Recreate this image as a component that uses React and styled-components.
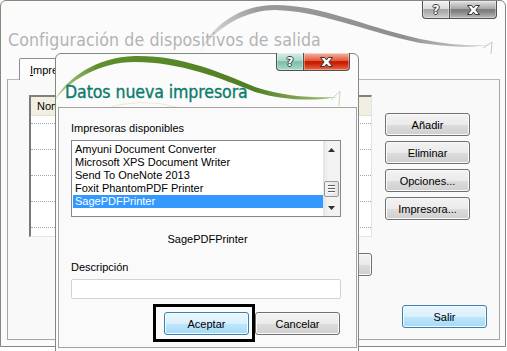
import React from 'react';
import styled, { createGlobalStyle, css } from 'styled-components';

const GlobalStyle = createGlobalStyle`
  html, body {
    margin: 0;
    padding: 0;
    background: #fff;
  }
  body {
    width: 507px;
    height: 351px;
    overflow: hidden;
    font-family: "Liberation Sans", Arial, sans-serif;
    font-size: 11px;
    color: #000;
  }
`;

const Desktop = styled.div`
  position: relative;
  width: 507px;
  height: 351px;
  overflow: hidden;
  background: #fff;
`;

const Window = styled.div`
  position: absolute;
  left: ${(p) => p.$left}px;
  top: ${(p) => p.$top}px;
  width: ${(p) => p.$width}px;
  height: ${(p) => p.$height}px;
  box-sizing: border-box;
  border: 1px solid #7f8b7b;
  border-radius: 6px 6px 0 0;
  background: #fbfbfb;
  display: flex;
  flex-direction: column;
  z-index: ${(p) => p.$z || 1};
`;

const Swoosh = styled.svg`
  position: absolute;
  left: 0;
  top: 0;
  pointer-events: none;
  z-index: 0;
`;

const CaptionRow = styled.div`
  position: relative;
  z-index: 2;
  display: flex;
  justify-content: flex-end;
  height: 18px;
  margin-top: ${(p) => p.$top || 0}px;
  padding-right: ${(p) => p.$right}px;
`;

const tones = {
  grayHelp: ['#f4f4f4', '#dadada', '#a9a9a9', '#cfcfcf'],
  grayClose: ['#e2e2e2', '#a8a8a8', '#7f7f7f', '#b9b9b9'],
  tealHelp: ['#d6eee6', '#a9d8ca', '#7fc2ad', '#a9dcc9'],
  redClose: ['#f3b6a6', '#e2583a', '#c91e02', '#ea6a48'],
};

const CaptionButton = styled.div`
  box-sizing: border-box;
  width: ${(p) => p.$width}px;
  height: 18px;
  display: flex;
  align-items: center;
  justify-content: center;
  border: 1px solid #4f5250;
  border-top: none;
  background: ${(p) => {
    const t = tones[p.$tone];
    return `linear-gradient(${t[0]} 0%, ${t[1]} 45%, ${t[2]} 50%, ${t[2]} 60%, ${t[3]} 100%)`;
  }};
  box-shadow: inset 0 0 0 1px rgba(255, 255, 255, 0.35);
  ${(p) =>
    p.$first
      ? css`
          border-radius: 0 0 0 4px;
        `
      : css`
          border-left: none;
          border-radius: 0 0 4px 0;
        `}
`;

const HelpGlyph = styled.span`
  font-family: "DejaVu Sans", sans-serif;
  font-weight: bold;
  font-size: 12px;
  line-height: 12px;
  color: #fff;
  text-shadow: 1px 0 #3a3a3a, -1px 0 #3a3a3a, 0 1px #3a3a3a, 0 -1px #3a3a3a;
`;

const CloseGlyph = () => (
  <svg width="15" height="12" viewBox="0 0 15 12">
    <path
      d="M1.5 1.5 h4 l2 2.4 l2 -2.4 h4 l-3.6 4.5 l3.6 4.5 h-4 l-2 -2.4 l-2 2.4 h-4 l3.6 -4.5 z"
      fill="#fff"
      stroke="#333"
      strokeWidth="1"
      strokeLinejoin="round"
    />
  </svg>
);

const Title = styled.div`
  position: relative;
  z-index: 1;
  margin: ${(p) => p.$top}px 0 0 ${(p) => p.$left}px;
  height: 22px;
  line-height: 22px;
  font-family: "DejaVu Sans Condensed", "DejaVu Sans", sans-serif;
  font-size: 17.6px;
  letter-spacing: ${(p) => p.$spacing || 0}px;
  color: ${(p) => p.$color};
  -webkit-text-stroke: ${(p) => p.$stroke || 0}px ${(p) => p.$color};
  white-space: nowrap;
`;

/* ---------- back window ---------- */

const TabStrip = styled.div`
  display: flex;
  height: 21px;
  margin-top: 7px;
  padding-left: 18px;
  position: relative;
  z-index: 2;
`;

const Tab = styled.div`
  box-sizing: border-box;
  width: 80px;
  height: 22px;
  padding: 5px 0 0 10px;
  border: 1px solid #898c95;
  border-bottom: none;
  border-radius: 2px 2px 0 0;
  background: #fcfcfc;
`;

const Panel = styled.div`
  flex: 1;
  display: flex;
  flex-direction: column;
  margin: 0 5px 6px 6px;
  border: 1px solid #a6a6a6;
  border-top-color: #b9b9b9;
  background: #f9f9f9;
`;

const PanelTop = styled.div`
  display: flex;
  align-items: flex-start;
  padding: 15px 0 0 21px;
`;

const LeftColumn = styled.div`
  display: flex;
  flex-direction: column;
  width: 343px;
`;

const ListView = styled.div`
  box-sizing: border-box;
  height: 142px;
  border-top: 2px solid #808080;
  border-left: 2px solid #7a7a7a;
  border-right: 1px solid #e4e4e4;
  border-bottom: 1px solid #e4e4e4;
  background: #fff;
`;

const ListHeader = styled.div`
  height: 18px;
  line-height: 18px;
  padding-left: 6px;
  background: #f1efe2;
  border-bottom: 1px solid #e2dfd0;
`;

const ListRows = styled.div`
  padding-top: 7px;
`;

const ListRow = styled.div`
  height: 25px;
  border-top: 1px dotted #a8a8a8;
`;

const UnderRow = styled.div`
  display: flex;
  justify-content: flex-end;
  margin-top: 16px;
`;

const ButtonColumn = styled.div`
  display: flex;
  flex-direction: column;
  gap: 5px;
  margin: 18px 0 0 13px;
`;

const PanelFooter = styled.div`
  margin-top: auto;
  display: flex;
  justify-content: flex-end;
  padding: 0 12px 11px 0;
`;

const Button = styled.button`
  box-sizing: border-box;
  width: 85px;
  height: 23px;
  padding: 0;
  border: 1px solid #707070;
  border-radius: 3px;
  font-family: "Liberation Sans", Arial, sans-serif;
  font-size: 11px;
  color: #000;
  background: linear-gradient(#f2f2f2 0%, #ebebeb 50%, #dddddd 51%, #cfcfcf 100%);
  box-shadow: inset 0 0 0 1px #fbfbfb;
  ${(p) =>
    p.$default &&
    css`
      border-color: #3c7fb1;
      background: linear-gradient(#eaf6fd 0%, #d9f0fc 50%, #bee6fd 51%, #a7d9f5 100%);
      box-shadow: inset 0 0 0 1px #f4fbff;
    `}
`;

/* ---------- front dialog ---------- */

const InnerPanel = styled.div`
  flex: 1;
  display: flex;
  flex-direction: column;
  margin: 4px 1px 3px 2px;
  padding: 14px 0 0 12px;
  border: 1px solid #a3a3a3;
  background: #fafafa;
  position: relative;
  z-index: 1;
`;

const Label = styled.div`
  height: 13px;
  line-height: 13px;
  margin-top: ${(p) => p.$top || 0}px;
`;

const ListBox = styled.div`
  box-sizing: border-box;
  display: flex;
  width: 270px;
  height: 77px;
  margin-top: 5px;
  border: 1px solid #828790;
  background: #fff;
`;

const ListItems = styled.div`
  flex: 1;
  padding: 2px 0 0 1px;
`;

const ListItem = styled.div`
  height: 13px;
  line-height: 13px;
  padding-left: 2px;
  white-space: nowrap;
  ${(p) =>
    p.$selected &&
    css`
      background: #3399ff;
      color: #fff;
    `}
`;

const ScrollBar = styled.div`
  width: 17px;
  display: flex;
  flex-direction: column;
  background: linear-gradient(90deg, #e3e3e3, #f3f3f3 30%, #f3f3f3);
`;

const ScrollArrow = styled.div`
  height: 17px;
  display: flex;
  align-items: center;
  justify-content: center;
`;

const ScrollTrack = styled.div`
  flex: 1;
  display: flex;
  flex-direction: column;
  justify-content: flex-end;
  padding-bottom: 2px;
`;

const ScrollThumb = styled.div`
  box-sizing: border-box;
  height: 16px;
  margin: 0 1px;
  border: 1px solid #979797;
  border-radius: 2px;
  background: linear-gradient(90deg, #f2f2f2, #e4e4e4);
  display: flex;
  flex-direction: column;
  align-items: center;
  justify-content: center;
  gap: 1px;
`;

const Grip = styled.div`
  width: 7px;
  height: 1px;
  background: #606060;
  box-shadow: 0 1px #fff;
  margin-bottom: 1px;
`;

const Selected = styled.div`
  height: 13px;
  line-height: 13px;
  margin: 16px 12px 0 0;
  text-align: center;
`;

const TextBox = styled.div`
  box-sizing: border-box;
  width: 270px;
  height: 20px;
  margin-top: 5px;
  border: 1px solid #d3d3d3;
  border-radius: 2px;
  background: #fff;
`;

const DialogButtons = styled.div`
  display: flex;
  justify-content: flex-end;
  gap: 6px;
  margin-top: 13px;
  padding-right: 16px;
`;

const Focused = styled.div`
  position: relative;
`;

const FocusFrame = styled.div`
  position: absolute;
  left: -11px;
  top: -8px;
  right: -6px;
  bottom: -7px;
  border: 3px solid #000;
  pointer-events: none;
`;

const Arrow = ({ up }) => (
  <svg width="7" height="4" viewBox="0 0 7 4">
    <path d={up ? 'M0 4 L3.5 0 L7 4 Z' : 'M0 0 L3.5 4 L7 0 Z'} fill="#303030" />
  </svg>
);

const printers = [
  'Amyuni Document Converter',
  'Microsoft XPS Document Writer',
  'Send To OneNote 2013',
  'Foxit PhantomPDF Printer',
  'SagePDFPrinter',
];

const App = () => {
  return (
    <>
      <GlobalStyle />
      <Desktop>
        <Window $left={0} $top={0} $width={506} $height={347}>
          <Swoosh width="506" height="80" viewBox="0 0 506 80">
            <defs>
              <linearGradient id="graySw" x1="0" x2="1" y1="0" y2="0">
                <stop offset="0" stopColor="#e2e2e2" />
                <stop offset="0.2" stopColor="#9a9a9a" />
                <stop offset="0.7" stopColor="#8e8e8e" />
                <stop offset="1" stopColor="#d8d8d8" />
              </linearGradient>
            </defs>
            <g transform="translate(-1,-1)">
              <path
                d="M200 52 C212 25 240 5 275 5 C320 5 360 25 420 39 C450 45 470 46 490 45 C470 48 450 47 420 43 C360 30 320 11 275 10 C245 10 215 28 200 52 Z"
                fill="url(#graySw)"
              />
              <path d="M483 48 L492 42 L491 54" fill="none" stroke="#c8c8c8" strokeWidth="1" />
            </g>
          </Swoosh>
          <CaptionRow $right={8}>
            <CaptionButton $tone="grayHelp" $width={28} $first>
              <HelpGlyph>?</HelpGlyph>
            </CaptionButton>
            <CaptionButton $tone="grayClose" $width={47}>
              <CloseGlyph />
            </CaptionButton>
          </CaptionRow>
          <Title $top={10} $left={7} $color="#b3b3b3" $spacing={0.1}>
            Configuración de dispositivos de salida
          </Title>
          <TabStrip>
            <Tab>
              <u>I</u>mpresoras
            </Tab>
          </TabStrip>
          <Panel>
            <PanelTop>
              <LeftColumn>
                <ListView>
                  <ListHeader>Nombre</ListHeader>
                  <ListRows>
                    {[0, 1, 2, 3, 4].map((i) => (
                      <ListRow key={i} />
                    ))}
                  </ListRows>
                </ListView>
                <UnderRow>
                  <Button>Defecto</Button>
                </UnderRow>
              </LeftColumn>
              <ButtonColumn>
                <Button>Añadir</Button>
                <Button>Eliminar</Button>
                <Button>Opciones...</Button>
                <Button>Impresora...</Button>
              </ButtonColumn>
            </PanelTop>
            <PanelFooter>
              <Button $default>Salir</Button>
            </PanelFooter>
          </Panel>
        </Window>

        <Window $left={55} $top={53} $width={304} $height={299} $z={5}>
          <Swoosh width="302" height="60" viewBox="0 0 302 60">
            <defs>
              <linearGradient id="greenSw" x1="0" x2="1" y1="0" y2="0">
                <stop offset="0" stopColor="#b4cc8c" />
                <stop offset="0.15" stopColor="#5e8f2c" />
                <stop offset="0.7" stopColor="#4f7f22" />
                <stop offset="1" stopColor="#a9c47e" />
              </linearGradient>
            </defs>
            <g transform="translate(-56,-54)">
              <path
                d="M55 100 C65 80 95 57 135 56 C180 55 220 72 255 87 C285 97 315 98 338 97 C315 101 285 101 255 92 C220 78 180 62 135 62 C98 62 68 82 55 100 Z"
                fill="url(#greenSw)"
              />
              <path d="M331 100 L340 91 L339 106" fill="none" stroke="#c9d7b0" strokeWidth="1" />
              <path d="M100 110 Q140 96 180 108" fill="none" stroke="#ecead0" strokeWidth="1" />
            </g>
          </Swoosh>
          <CaptionRow $right={8} $top={-1}>
            <CaptionButton $tone="tealHelp" $width={28} $first>
              <HelpGlyph>?</HelpGlyph>
            </CaptionButton>
            <CaptionButton $tone="redClose" $width={46}>
              <CloseGlyph />
            </CaptionButton>
          </CaptionRow>
          <Title $top={10} $left={9} $color="#0b7b6d" $stroke={0.35} $spacing={-0.1}>
            Datos nueva impresora
          </Title>
          <InnerPanel>
            <Label>Impresoras disponibles</Label>
            <ListBox>
              <ListItems>
                {printers.map((name) => (
                  <ListItem key={name} $selected={name === 'SagePDFPrinter'}>
                    {name}
                  </ListItem>
                ))}
              </ListItems>
              <ScrollBar>
                <ScrollArrow>
                  <Arrow up />
                </ScrollArrow>
                <ScrollTrack>
                  <ScrollThumb>
                    <Grip />
                    <Grip />
                    <Grip />
                  </ScrollThumb>
                </ScrollTrack>
                <ScrollArrow>
                  <Arrow />
                </ScrollArrow>
              </ScrollBar>
            </ListBox>
            <Selected>SagePDFPrinter</Selected>
            <Label $top={15}>Descripción</Label>
            <TextBox />
            <DialogButtons>
              <Focused>
                <Button $default>Aceptar</Button>
                <FocusFrame />
              </Focused>
              <Button>Cancelar</Button>
            </DialogButtons>
          </InnerPanel>
        </Window>
      </Desktop>
    </>
  );
};

export default App;
